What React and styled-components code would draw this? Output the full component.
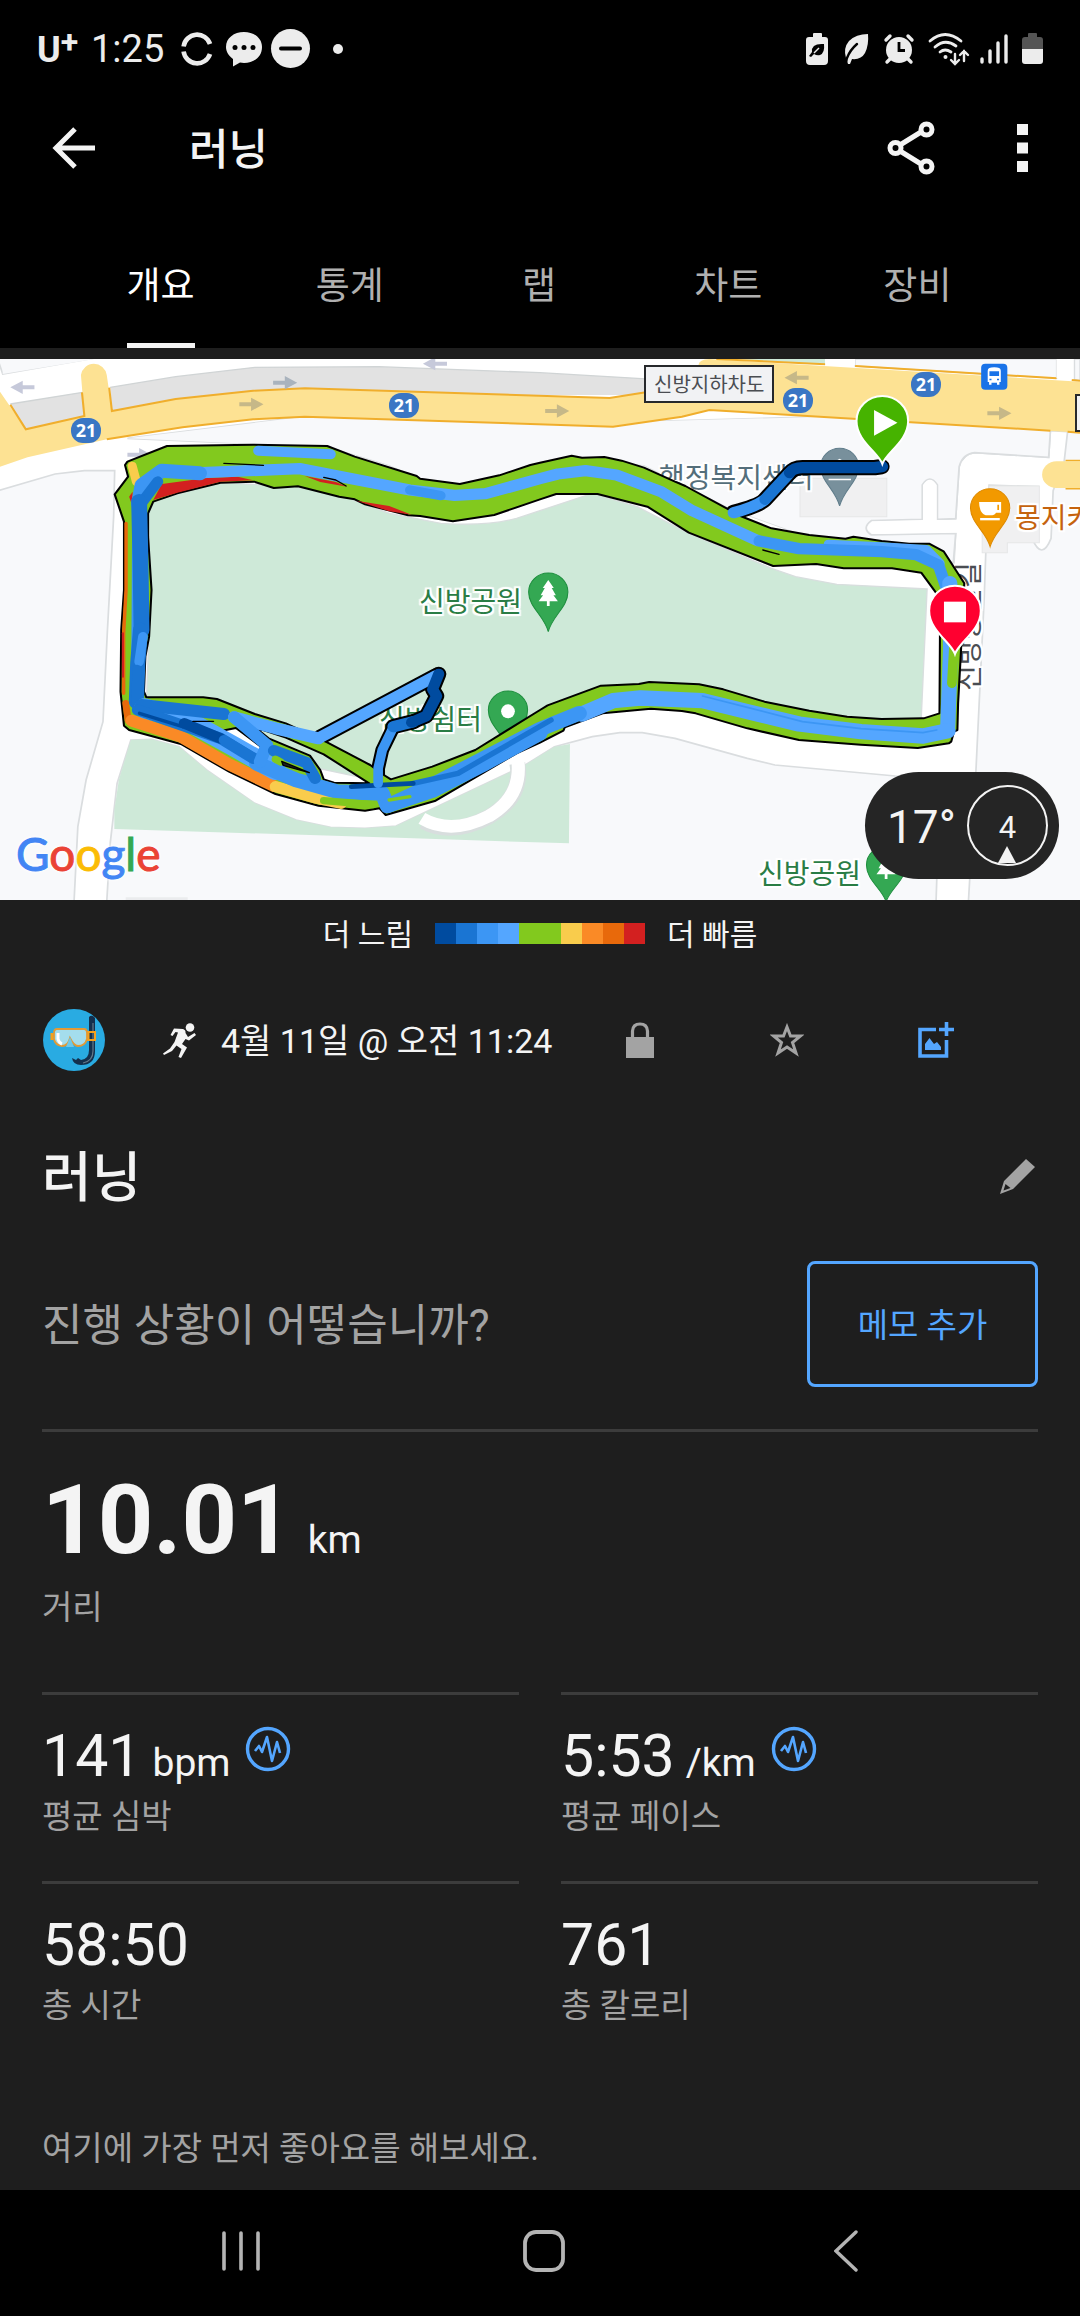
import React from "react";
import styled, { createGlobalStyle } from "styled-components";

const sans = `Roboto, "Noto Sans CJK KR", "Noto Sans", sans-serif`;

const color = {
  bar: "#000000",
  page: "#1e1e1e",
  text: "#f4f4f4",
  muted: "#a3a3a3",
  line: "#3c3c3c",
  accent: "#54a6ff",
};

const pace = {
  slowest: "#004b9f",
  slower: "#1a75d3",
  slow: "#3c96f4",
  easy: "#54a6ff",
  steady: "#82c91e",
  brisk: "#f9cc4c",
  fast: "#fa8a26",
  faster: "#e8690b",
  fastest: "#d32020",
};

const Global = createGlobalStyle`
  *, *::before, *::after { box-sizing: border-box; }
  body { margin: 0; background: ${color.page}; font-family: ${sans}; color: ${color.text}; }
  button { font: inherit; color: inherit; background: none; border: 0; padding: 0; cursor: pointer; }
  h1, h2, p, dl, dd, dt { margin: 0; font-weight: 400; }
  svg { display: block; }
`;

const Screen = styled.div`
  display: flex;
  flex-direction: column;
  min-height: 100vh;
  overflow: hidden;
`;

/* ---------- status bar ---------- */

const StatusBar = styled.div`
  display: flex;
  align-items: center;
  justify-content: space-between;
  height: 97px;
  padding: 0 37px;
  background: ${color.bar};
  color: #ececec;
`;

const StatusGroup = styled.div`
  display: flex;
  align-items: center;
  gap: ${(p) => p.$gap || 0}px;
  svg { overflow: visible; }
`;

const Carrier = styled.span`
  display: flex;
  width: 54px;
  padding-top: 2px;
  font: 700 36px/40px Roboto, sans-serif;
  sup { font-size: 32px; line-height: 24px; vertical-align: top; }
`;

const Clock = styled.span`
  width: 82px;
  font-size: 38px;
  line-height: 46px;
`;

const StatusCell = styled.span`
  display: grid;
  place-items: center;
  width: 47px;
  height: 47px;
`;

/* ---------- header ---------- */

const Header = styled.header`
  background: ${color.bar};
`;

const AppBar = styled.div`
  display: flex;
  align-items: center;
  height: 102px;
  padding: 0 42px 0 50px;
`;

const IconButton = styled.button`
  display: grid;
  place-items: center;
  width: ${(p) => p.$width || 48}px;
  height: 62px;
  color: ${(p) => p.$color || color.text};
`;

const AppTitle = styled.h1`
  flex: 1;
  padding: 4px 0 0 91px;
  font-size: 43px;
  line-height: 50px;
  font-weight: 500;
`;

const AppActions = styled.div`
  display: flex;
  align-items: center;
  gap: 71px;
`;

const Tabs = styled.nav`
  display: grid;
  grid-template-columns: repeat(5, 1fr);
  height: 149px;
  padding: 32px 68px 0 66px;
`;

const Tab = styled.button`
  justify-self: center;
  font-size: 37px;
  line-height: 50px;
  border-bottom: 5px solid ${(p) => (p.$active ? color.text : "transparent")};
  color: ${(p) => (p.$active ? "#ffffff" : "#b0b0b0")};
`;

/* ---------- map ---------- */

const MapPanel = styled.section`
  position: relative;
  margin-top: 11px;
  aspect-ratio: 1080 / 541;
  overflow: hidden;
  background: #f8f9fb;
`;

const MapLayer = styled.svg`
  position: absolute;
  inset: 0;
  width: 100%;
  height: 100%;
`;

const Pinned = styled.span`
  position: absolute;
  left: ${(p) => p.$x}px;
  top: ${(p) => p.$y}px;
  white-space: nowrap;
`;

const PlaceName = styled(Pinned)`
  font-size: 28px;
  line-height: 36px;
  color: ${(p) => p.$tone};
  text-shadow: 2px 0 1px #fff, -2px 0 1px #fff, 0 2px 1px #fff, 0 -2px 1px #fff,
    2px 2px 1px #fff, -2px -2px 1px #fff, 2px -2px 1px #fff, -2px 2px 1px #fff;
`;

const StreetName = styled(PlaceName)`
  transform-origin: 0 0;
  transform: rotate(-90deg);
`;

const RoadSign = styled(Pinned)`
  height: 38px;
  padding: 0 8px;
  border: 2px solid #26282b;
  background: #f1f2f4;
  color: #4a4d52;
  font-size: 20px;
  line-height: 36px;
`;

const Shield = styled(Pinned)`
  width: 30px;
  height: 25px;
  border-radius: 12px;
  background: #3a76c4;
  color: #fff;
  font: 700 18px/25px "Noto Sans", sans-serif;
  text-align: center;
`;

const Brand = styled(Pinned)`
  font: 400 46px/58px Lato, sans-serif;
  -webkit-text-stroke: 1px currentColor;
  text-shadow: 0 0 5px #fff, 0 0 5px #fff;
`;

const BrandLetter = styled.span`
  color: ${(p) => p.$c};
`;

const Weather = styled.div`
  position: absolute;
  right: 21px;
  bottom: 21px;
  display: flex;
  align-items: center;
  justify-content: space-between;
  width: 194px;
  height: 107px;
  padding: 0 11px 0 22px;
  border-radius: 54px;
  background: #252525;
  font-size: 46px;
  line-height: 56px;
`;

const Degrees = styled.span`
  padding-top: 3px;
`;

const Wind = styled.div`
  position: relative;
  width: 81px;
  height: 81px;
  border: 2px solid ${color.text};
  border-radius: 50%;
  font-size: 31px;
  line-height: 82px;
  text-align: center;
  svg { position: absolute; left: 28px; bottom: 0; }
`;

/* ---------- body ---------- */

const Legend = styled.div`
  display: flex;
  align-items: center;
  justify-content: center;
  gap: 22px;
  height: 66px;
  font-size: 30px;
  line-height: 40px;
`;

const LegendText = styled.span`
  padding-top: 3px;
`;

const Scale = styled.div`
  display: flex;
  height: 21px;
`;

const Swatch = styled.span`
  width: ${(p) => p.$span * 21}px;
  background: ${(p) => p.$c};
`;

const Body = styled.main`
  flex: 1;
  padding: 0 42px;
`;

const MetaRow = styled.div`
  display: flex;
  align-items: center;
  height: 148px;
`;

const When = styled.p`
  display: flex;
  flex: 1;
  align-items: center;
  gap: 23px;
  padding: 2px 0 0 57px;
  font-size: 34px;
  line-height: 46px;
  white-space: nowrap;
`;

const MetaActions = styled.div`
  display: grid;
  grid-template-columns: 147px 147px 151px;
  justify-items: center;
  margin-right: 27px;
`;

const TitleRow = styled.div`
  display: flex;
  align-items: center;
  justify-content: space-between;
  height: 126px;
`;

const ActivityTitle = styled.h2`
  padding-top: 4px;
  font-size: 54px;
  line-height: 72px;
  font-weight: 500;
`;

const NoteRow = styled.div`
  display: flex;
  align-items: center;
  justify-content: space-between;
  padding: 21px 0 42px;
  border-bottom: 3px solid ${color.line};
`;

const Prompt = styled.p`
  padding-top: 3px;
  color: ${color.muted};
  font-size: 44px;
  line-height: 60px;
`;

const OutlineButton = styled.button`
  width: 231px;
  height: 126px;
  padding-top: 3px;
  border: 3px solid ${color.accent};
  border-radius: 8px;
  color: ${color.accent};
  font-size: 33px;
  line-height: 44px;
`;

const Distance = styled.dl`
  display: flex;
  flex-direction: column-reverse;
  justify-content: flex-end;
  gap: 8px;
  height: 260px;
  padding-top: 30px;
`;

const Big = styled.dd`
  font-size: 97px;
  line-height: 116px;
  font-weight: 700;
`;

const Unit = styled.span`
  margin-left: ${(p) => p.$gap || 11}px;
  font-size: 39px;
  line-height: 40px;
  font-weight: 400;
`;

const Label = styled.dt`
  color: ${color.muted};
  font-size: 33px;
  line-height: 44px;
`;

const Stats = styled.dl`
  display: grid;
  grid-template-columns: 1fr 1fr;
  column-gap: 42px;
`;

const Stat = styled.div`
  display: flex;
  flex-direction: column-reverse;
  justify-content: flex-end;
  gap: 4px;
  height: 189px;
  padding-top: 26px;
  border-top: 3px solid ${color.line};
`;

const Value = styled.dd`
  display: flex;
  align-items: flex-start;
  gap: 15px;
  font-size: 59px;
  line-height: 70px;
  svg { margin-top: 5px; }
`;

const Likes = styled.p`
  padding: 56px 0 18px;
  color: ${color.muted};
  font-size: 33px;
  line-height: 46px;
`;

const NavBar = styled.nav`
  display: flex;
  justify-content: space-between;
  height: 126px;
  padding: 0 210px 0 217px;
  background: ${color.bar};
`;

const NavButton = styled(IconButton)`
  height: 122px;
  color: #b4b4b4;
`;

/* ---------- map data ---------- */

const ring =
  "M363 345 L370 335 L485 288 L735 284 L950 288 L1030 320 L1210 378 L1220 386 L1335 402 L1450 376 L1540 345 L1568 338 L1660 317 L1690 323 L1755 321 L1805 332 L1870 353 L1960 395 L1990 408 L2110 475 L2150 498 L2240 535 L2350 555 L2455 566 L2478 560 L2560 573 L2640 581 L2698 581 L2740 604 L2800 700 L2790 910 L2782 1060 L2780 1140 L2770 1145 L2762 1175 L2755 1180 L2665 1194 L2500 1184 L2320 1170 L2170 1135 L2020 1090 L1980 1083 L1890 1076 L1750 1090 L1640 1132 L1636 1142 L1568 1178 L1500 1210 L1265 1352 L1120 1395 L1102 1375 L1060 1382 L925 1367 L800 1332 L665 1265 L525 1182 L375 1140 L360 1127 L350 1025 L352 840 L360 720 L360 515 L333 433 L372 380 Z " +
  "M430 490 L445 455 L515 430 L640 398 L738 395 L795 414 L865 409 L985 440 L1030 448 L1060 463 L1185 496 L1220 498 L1315 514 L1435 495 L1568 448 L1615 432 L1735 432 L1880 470 L2000 548 L2245 648 L2370 642 L2450 655 L2590 655 L2675 668 L2730 745 L2728 1090 L2682 1105 L2560 1107 L2460 1100 L2350 1082 L2220 1055 L2100 1018 L2030 1003 L1885 996 L1855 1002 L1745 1007 L1590 1066 L1568 1080 L1380 1200 L1255 1250 L1135 1288 L1110 1272 L1075 1245 L950 1177 L830 1120 L740 1092 L630 1047 L590 1042 L425 1042 L418 1025 L422 920 L433 860 L440 720 L430 560 Z " +
  "M740 1132 L830 1163 L940 1213 L1072 1300 L970 1298 L940 1288 L930 1260 L900 1217 L780 1165 Z " +
  "M645 1142 L685 1134 L768 1198 L758 1213 L690 1175 Z";

const strands = [
  ["M750 302 L960 313", "easy", 30],
  ["M384 348 L396 395", "brisk", 26],
  ["M366 520 L366 720 L359 850 L359 1030", "faster", 10],
  ["M357 850 L357 980", "fastest", 6],
  ["M365 1060 L372 1110", "faster", 20],
  ["M382 1112 L525 1160 L665 1243 L795 1308", "fast", 36],
  ["M800 1310 L920 1345 L990 1360", "brisk", 34],
  ["M394 450 L392 800 L390 1050", "slow", 20],
  ["M2405 582 L2560 590 L2690 598 L2730 640", "easy", 26],
  ["M585 368 L870 356 L1190 420 L1320 436 L1410 431 L1568 386 L1620 372 L1700 362 L1790 375 L1920 425 L2010 482 L2200 572", "easy", 34],
  ["M1190 420 L1280 437", "slow", 28],
  ["M2205 573 L2320 596 L2560 605 L2660 614 L2725 645 L2750 720", "slow", 34],
  ["M402 460 L412 405 L470 362 L580 370", "slow", 42],
  ["M410 460 L458 395", "slower", 32],
  ["M404 455 L408 640 L411 840", "slower", 46],
  ["M408 840 L400 940 L396 1055", "slower", 44],
  ["M415 860 L404 935", "slow", 28],
  ["M398 958 L396 1060", "slower", 28],
  ["M2758 700 L2760 900 L2752 1130", "easy", 44],
  ["M2770 890 L2764 1000", "steady", 28],
  ["M2752 1142 L2680 1158 L2500 1145 L2320 1122 L2170 1085 L2040 1052 L1860 1044 L1780 1052 L1690 1092", "easy", 46],
  ["M2720 1140 L2680 1148 L2500 1136 L2330 1115 L2170 1072 L2040 1038", "slow", 5],
  ["M420 1075 L540 1110 L680 1190 L800 1260", "easy", 60],
  ["M1682 1090 L1568 1138 L1400 1228 L1255 1305 L1125 1368 L1110 1330 L980 1325 L860 1290 L745 1240", "slow", 44],
  ["M1568 1150 L1400 1245 L1255 1322 L1130 1365", "slow", 44],
  ["M1130 1350 L1190 1340", "steady", 10],
  ["M940 1352 L1080 1364", "steady", 22],
  ["M1600 1110 L1440 1205 L1330 1270 L1200 1300", "slower", 16],
  ["M1200 1300 L1020 1310", "slowest", 14],
  ["M410 1065 L650 1092", "slower", 36],
  ["M400 1080 L640 1165 L735 1225", "slower", 34],
  ["M405 1090 L530 1130", "slowest", 10],
  ["M535 1120 L640 1165", "slowest", 32],
  ["M650 1170 L740 1225", "slower", 30],
  ["M680 1102 L800 1135 L925 1165", "easy", 36],
  ["M680 1102 L775 1185 L755 1235", "slow", 36],
  ["M795 1202 L890 1238 L915 1285", "slower", 34],
  ["M800 1228 L815 1236", "steady", 22],
];

const spurs = [
  { d: "M930 1162 L1265 978", c: "easy", w: 34 },
  { d: "M1098 1300 L1098 1255 L1110 1200 L1142 1132", c: "slow", w: 28 },
  { d: "M1142 1130 L1200 1115", c: "slower", w: 34 },
  { d: "M1195 1117 L1238 1098 L1268 1038 L1256 1018 L1274 972", c: "slowest", w: 32 },
];

const roadArrows = [
  [30, 112, -1, "#c6c9da"],
  [793, 98, 1, "#a9b3bd"],
  [695, 163, 1, "#c6b888"],
  [1228, 41, -1, "#c6c9da"],
  [1583, 183, 1, "#c6b888"],
  [2278, 83, -1, "#c6b888"],
  [2867, 190, 1, "#c6b888"],
  [370, 314, 1, "#c6c9da"],
];

function Pin({ x, y, r, tip, fill, stroke, children }) {
  return (
    <g>
      <path
        d={`M${x} ${tip} C${x - 12} ${y + r * 1.25} ${x - r} ${y + r * 0.8} ${x - r} ${y} A${r} ${r} 0 0 1 ${x + r} ${y} C${x + r} ${y + r * 0.8} ${x + 12} ${y + r * 1.25} ${x} ${tip}Z`}
        fill={fill}
        stroke={stroke}
        strokeWidth={stroke === "#fff" ? 6 : 3}
      />
      {children}
    </g>
  );
}

const Tree = ({ x, y }) => (
  <path
    transform={`translate(${x} ${y})`}
    d="M0 -36 L16 -12 H10 L22 10 H15 L28 28 H4 V42 H-4 V28 H-28 L-15 10 H-22 L-10 -12 H-16Z"
    fill="#fff"
  />
);

function BaseMap() {
  return (
    <MapLayer viewBox="0 27 3136 1623" preserveAspectRatio="none" aria-hidden="true">
      <rect y="27" width="3136" height="1623" fill="#f8f9fb" />
      <g stroke="#dadddf" strokeWidth="5" fill="#fff">
        <path d="M-9 20 L8 72 L275 24 L3140 10 V240 L2400 200 L1600 222 L885 200 L370 265 L740 282 L960 292 L1130 345 L1300 420 L1650 330 L1870 345 L2130 480 L2400 580 L2700 600 L2770 640 L2775 550 L2530 555 Q2515 535 2530 512 L2678 508 V405 Q2700 370 2722 405 L2722 508 L2775 506 L2785 350 Q2795 312 2830 308 L3045 322 L3050 242 L3100 245 L3090 335 L3058 422 L3052 565 Q3025 635 2997 565 L3015 410 L2872 405 L2862 620 L2858 740 L2833 1280 L2812 1655 H2718 L2730 1280 L2600 1278 L2250 1245 L2170 1225 L1960 1165 L1865 1148 L1800 1148 L1720 1160 L1610 1190 L1525 1245 L1150 1428 L1060 1435 L960 1432 L860 1410 L740 1360 L670 1310 L600 1260 L520 1190 L440 1168 L380 1170 L340 1300 L320 1480 L310 1655 H215 L226 1430 L250 1290 L299 1115 L312 840 L330 500 L333 362 L245 362 L160 372 L-9 423Z" />
      </g>
      <path d="M8 27 V72 L275 27Z" fill="#f8f9fb" />
      <path d="M370 265 L740 282 L960 292 L1130 345 L1300 420 L1650 330 L1870 345 L2130 480 L2400 580 L2700 600 L2770 640 L2775 550 L2530 555 Q2515 535 2530 512 L2678 508 V405 Q2700 370 2722 405 L2722 508 L2775 506 L2785 350 Q2795 312 2830 308 L3045 322 L3050 242 L2400 200 L1600 222 L885 200Z" fill="#f8f9fb" />
      <path d="M2400 576 L2700 600 L2768 640 L2775 550 L2530 555 Q2500 535 2530 512 L2678 508 V405 Q2700 370 2722 405 V508 L2775 506 L2785 350 Q2795 312 2830 308 L3045 322 L3050 242" fill="none" stroke="#dadddf" strokeWidth="5" />
      <path d="M2532 514 L2680 510 V405 Q2700 374 2720 405 V510 H2785 V548 L2532 552 Q2506 535 2532 514Z" fill="#fff" />
      <path d="M380 1170 L440 1168 L520 1190 L600 1260 L670 1310 L740 1360 L860 1410 L960 1432 L1060 1435 L1150 1428 L1525 1245 L1610 1190 L1655 1182 L1652 1480 L1200 1465 L332 1437 V1380 L345 1290Z" fill="#cee9d8" />
      <path d="M1230 1415 Q1310 1460 1420 1400 Q1520 1340 1502 1240" fill="none" stroke="#d8dede" strokeWidth="46" />
      <path d="M1225 1405 Q1310 1456 1420 1398 Q1515 1340 1504 1235" fill="none" stroke="#fff" strokeWidth="38" />
      <path d="M430 480 L450 450 L640 398 L860 410 L1000 440 L1130 490 L1280 520 Q1410 530 1500 505 L1568 482 L1720 430 L1850 470 L2000 550 L2240 655 L2310 680 L2430 703 L2692 717 L2675 1105 L2560 1108 L2250 1080 L1900 1000 L1750 1010 L1568 1090 L1400 1200 L1130 1300 L900 1250 L650 1090 L425 1060 L437 720Z" fill="#cee9d8" stroke="#d8dede" strokeWidth="4" />
      <path d="M2323 385 H2575 V500 H2323Z M2872 408 H3018 V578 H2925 V608 H2852 V540 H2872Z" fill="#f0f0f1" stroke="#e6e7e8" strokeWidth="3" />
      <path d="M365 1642 H545 V1655 H365Z" fill="#ebecee" />

      <path d="M30 162 L240 127 L245 198 L75 238Z M320 112 L510 80 L740 52 L1100 50 L1568 68 L1900 88 V135 H1500 L885 118 L510 150 L325 183Z" fill="#e2e2e2" />
      <path d="M30 162 L240 127 M320 112 L510 80 L740 52 L1100 50 L1568 68 L1900 88" fill="none" stroke="#d0d4d5" strokeWidth="4" />
      <path d="M2120 27 H2396 V42Z" fill="#cee9d8" />
      <path d="M2483 27 H3068 V85 L2483 48Z M3120 27 H3136 V92 L3120 88Z" fill="#f8f9fb" stroke="#dadddf" strokeWidth="4" />
      <path d="M0 125 L75 238 L245 198 L235 75 A38 40 0 0 1 310 75 L325 183 L510 147 L735 122 L885 115 L1770 145 L2028 95 V45 Q2030 28 2060 27 L3136 95 V248 L2060 180 L1980 200 L1780 230 L885 200 L735 208 L530 232 L310 268 L80 322 L0 350Z" fill="#fde293" />
      <path d="M30 164 L75 238 L245 198 L238 127 M317 113 L325 183 L510 147 L735 122 L885 115 L1770 144 L1880 126 M2080 27 L2396 43 M2483 48 L3068 85 M3112 90 L3136 92 M3136 248 L3100 245 M3050 242 L2060 180 L1980 200 L1780 230 L885 200 L735 208 L530 232 L310 268" fill="none" stroke="#f0ae2c" strokeWidth="6" />
      <path d="M3094 332 H3136 M3094 416 H3136" fill="none" stroke="#f0ae2c" strokeWidth="5" />
      <path d="M3136 334 H3068 A42 40 0 0 0 3068 414 H3136Z" fill="#fde293" />
      <path d="M2396 20 H2483 V46 L2396 41Z M3068 20 H3114 V88 L3068 84Z" fill="#fff" />
      {roadArrows.map(([x, y, dir, c]) => (
        <path
          key={`${x}-${y}`}
          transform={`translate(${dir < 0 ? x + 70 : x} ${y}) scale(${dir} 1)`}
          d="M0 -6 H34 V-20 L70 0 L34 20 V6 H0Z"
          fill={c}
        />
      ))}

      <Pin x={2438} y={350} r={55} tip={468} fill="#78909c" stroke="#607d8b">
        <path d="M2438 326 L2470 345 H2406Z M2411 352 H2422 V372 H2411Z M2433 352 H2444 V372 H2433Z M2455 352 H2466 V372 H2455Z M2406 386 H2471 V391 H2406Z" fill="#fff" />
      </Pin>
      <Pin x={2875} y={473} r={57} tip={590} fill="#f29900" stroke="#de8a00">
        <path d="M2843 456 H2907 V488 H2892 Q2888 496 2876 496 H2862 Q2843 488 2843 456 M2896 464 V480 H2901 V464Z" fill="#fff" fillRule="evenodd" />
        <path d="M2846 504 H2903 V511 H2846Z" fill="#fff" />
      </Pin>
      <Pin x={1592} y={726} r={57} tip={845} fill="#34a853" stroke="#1e8e3e">
        <Tree x={1592} y={726} />
      </Pin>
      <Pin x={1475} y={1080} r={57} tip={1200} fill="#34a853" stroke="#1e8e3e">
        <ellipse cx="1475" cy="1084" rx="20" ry="21" fill="#fff" />
      </Pin>
      <Pin x={2573} y={1545} r={57} tip={1655} fill="#34a853" stroke="#1e8e3e">
        <Tree x={2573} y={1545} />
      </Pin>
      <rect x="2849" y="41" width="76" height="78" rx="12" fill="#1a73e8" />
      <path d="M2868 62 Q2868 52 2887 52 Q2906 52 2906 62 V96 H2902 V104 H2895 V98 H2879 V104 H2872 V96 H2868Z M2873 64 V78 H2901 V64Z M2873 86 V91 H2879 V86Z M2895 86 V91 H2901 V86Z" fill="#fff" fillRule="evenodd" />
    </MapLayer>
  );
}

function RouteLayer() {
  return (
    <MapLayer viewBox="0 27 3136 1623" preserveAspectRatio="none" role="img" aria-label="러닝 경로">
      <g fill="none" strokeLinejoin="round" strokeLinecap="round">
        <path d="M2560 350 L2540 353 L2330 353 Q2305 353 2290 372 L2220 450 Q2205 466 2130 487" stroke="#000" strokeWidth="46" />
        {spurs.map((s) => (
          <path key={s.d} d={s.d} stroke="#000" strokeWidth={s.w + 12} />
        ))}
        <path d={ring} fill={pace.steady} fillRule="evenodd" stroke="#000" strokeWidth="6" />
        <path d="M445 450 L515 428 L640 395 L735 391 L690 380 L600 384 L470 402Z M885 378 L975 396 L1008 410 L930 396Z M1035 452 L1130 468 L1195 494 L1130 484Z M375 440 L385 425 V470Z" fill={pace.fastest} />
        {strands.map(([d, c, w]) => (
          <path key={d} d={d} stroke={pace[c]} strokeWidth={w} />
        ))}
        <path d="M650 340 L765 346 M940 382 L975 390 L1005 408 M2215 600 L2262 613 M560 1114 L620 1114" stroke="#000" strokeWidth="4" />
        <path d="M818 1234 L898 1268 L822 1246Z" fill="#1e1e1e" stroke="#000" strokeWidth="4" />
        <path d="M2130 488 Q2190 472 2220 450" stroke={pace.slow} strokeWidth="34" />
        <path d="M2222 448 L2290 372" stroke={pace.slower} strokeWidth="34" />
        <path d="M2562 350 L2540 353 L2330 353 Q2305 353 2293 368" stroke={pace.slowest} strokeWidth="34" />
        {spurs.map((s) => (
          <path key={s.d} d={s.d} stroke={pace[s.c]} strokeWidth={s.w} />
        ))}
      </g>
      <Pin x={2562} y={213} r={75} tip={342} fill="#46b300" stroke="#fff">
        <path d="M2538 180 V257 L2606 218Z" fill="#fff" />
      </Pin>
      <Pin x={2773} y={782} r={75} tip={912} fill="#ff0030" stroke="#fff">
        <rect x="2741" y="755" width="64" height="62" fill="#fff" />
      </Pin>
    </MapLayer>
  );
}

const park = "#2a7d45";
const shields = [[71, 59], [389, 34], [783, 29], [911, 13]];
const letters = [["G", "#4285f4"], ["o", "#ea4335"], ["o", "#fbbc05"], ["g", "#4285f4"], ["l", "#34a853"], ["e", "#ea4335"]];
const scale = [
  ["slowest", 1], ["slower", 1], ["slow", 1], ["easy", 1], ["steady", 2],
  ["brisk", 1], ["fast", 1], ["faster", 1], ["fastest", 1],
];

/* ---------- icons ---------- */

const PulseIcon = () => (
  <svg width="46" height="46" viewBox="0 0 46 46" fill="none" stroke={color.accent} strokeLinejoin="round">
    <circle cx="23" cy="23" r="20.5" strokeWidth="3.4" />
    <path d="M10 25 L14 20 L17 26 L22 11 L27 35 L32 16 L35 27" strokeWidth="2.6" />
  </svg>
);

const LeafShape = ({ fill, vein }) => (
  <g>
    <path d="M24 1 Q12 1 5 8 Q-1 15 2 25 L4 25 Q3 29 4 31 H6 L8 26 Q17 27 21 20 Q25 12 24 1Z" fill={fill} />
    <path d="M3 25 Q6 17 13 11" stroke={vein} strokeWidth="2.4" fill="none" strokeLinecap="round" />
  </g>
);

function StatusIcons() {
  return (
    <StatusGroup $gap={14} aria-hidden="true">
      <svg width="24" height="32" viewBox="0 0 24 32">
        <path d="M7 1 Q7 0 8 0 H15 Q16 0 16 1 V4 H19 Q22 4 22 7 V28 Q22 32 18 32 H4 Q0 32 0 28 V7 Q0 4 3 4 H7Z" fill="#ececec" />
        <path d="M18 11 Q5 10 6 19 L3 23 L5 24 L8 21 Q11 23 14 22 Q19 20 18 11Z" fill="#000" />
        <path d="M8 20 L13 15" stroke="#ececec" strokeWidth="1.4" />
      </svg>
      <svg width="26" height="32" viewBox="0 0 26 32"><LeafShape fill="#ececec" vein="#000" /></svg>
      <svg width="30" height="30" viewBox="0 0 30 30">
        <circle cx="15" cy="16" r="13" fill="#ececec" />
        <path d="M2 6 L6 2 M28 6 L24 2 M6 25 L3 28 M24 25 L27 28" stroke="#ececec" strokeWidth="3.4" strokeLinecap="round" />
        <path d="M15 8 V16.500 H21" stroke="#000" strokeWidth="2.8" fill="none" />
      </svg>
      <svg width="42" height="32" viewBox="0 0 42 32" fill="none" stroke="#ececec" strokeLinecap="round">
        <path d="M2 8 Q17 -5 33 8 M7 14 Q17 5 28 13 M12 19 Q17 15 23 19" strokeWidth="2.800" />
        <circle cx="17.500" cy="24" r="2" fill="#ececec" stroke="none" />
        <path d="M27 21 V30 M23 27 L27 31 L31 27 M36 28 V18 M32 22 L36 18 L40 22" strokeWidth="2.400" />
      </svg>
      <svg width="24" height="30" viewBox="4 0 24 30" stroke="#ececec" strokeWidth="3.400" strokeLinecap="round">
        <path d="M2 25 V28 M10 17 V28 M18 9 V28 M26 2 V28" />
      </svg>
      <svg width="21" height="31" viewBox="0 0 21 31">
        <path d="M6 1 Q6 0 7 0 H14 Q15 0 15 1 V4 H18 Q21 4 21 7 V16 H0 V7 Q0 4 3 4 H6Z" fill="#555" />
        <path d="M0 16 H21 V28 Q21 31 18 31 H3 Q0 31 0 28Z" fill="#ececec" />
      </svg>
    </StatusGroup>
  );
}

function Avatar() {
  return (
    <svg width="64" height="62" viewBox="0 0 64 62" role="img" aria-label="프로필">
      <circle cx="32" cy="31" r="31" fill="#29abe2" />
      <path d="M47 8 Q50 5 53 9 V42 Q53 56 39 56 Q31 56 30 49 L34 51 L36 49 L39 51 Q47 50 47 41Z" fill="#14304d" />
      <path d="M51 14 V42 Q51 52 41 54" stroke="#65798a" strokeWidth="1.200" fill="none" />
      <rect x="45" y="23" width="8" height="8" fill="none" stroke="#f5a11c" strokeWidth="2" />
      <path d="M10 24 V31 M46 23 V31" stroke="#f5a11c" strokeWidth="3" />
      <path d="M15 20 H42 Q45 20 45 24 V30 Q43 37 36 37 Q32 37 28 29 Q26 37 20 37 Q13 36 12 30 V24 Q12 20 15 20Z" fill="#a4dded" stroke="#e39a35" strokeWidth="1.800" />
      <path d="M16 24 V30 Q17 34 20 35" stroke="#fff" strokeWidth="3" fill="none" />
      <path d="M28 28 L32 38 H24Z" fill="#6cc8ea" />
    </svg>
  );
}

const Runner = () => (
  <svg width="35" height="36" viewBox="0 0 35 36" aria-hidden="true">
    <circle cx="27" cy="4.500" r="4.300" fill={color.text} />
    <path d="M11 5.500 L20 6 Q23 7 22.500 10 L25 14 L31.500 10 L33 12 L26 17.500 L22.500 16 L19 21 L24 24.500 L18 35 L15.500 34 L18.500 26 L13.500 22.500 L9 28 L1 32 L0 30.500 L7 25.500 L11.500 19 L15 9.500 L12.500 9 L9.500 13 L7.500 12Z" fill={color.text} />
  </svg>
);

/* ---------- app ---------- */

const tabs = ["개요", "통계", "랩", "차트", "장비"];

const stats = [
  { value: "141", unit: "bpm", label: "평균 심박", pulse: true },
  { value: "5:53", unit: "/km", label: "평균 페이스", pulse: true },
  { value: "58:50", label: "총 시간" },
  { value: "761", label: "총 칼로리" },
];

export default function App() {
  return (
    <Screen>
      <Global />
      <StatusBar>
        <StatusGroup>
          <Carrier>U<sup>+</sup></Carrier>
          <Clock>1:25</Clock>
          <StatusCell>
            <svg width="32" height="32" viewBox="0 0 32 32" fill="none" stroke="#ececec" strokeWidth="4.600">
              <path d="M2.600 13.500 A13.600 13.600 0 0 1 29 11 M2.600 18.500 A13.600 13.600 0 0 0 29 21" />
            </svg>
          </StatusCell>
          <StatusCell>
            <svg width="36" height="34" viewBox="0 0 36 34">
              <path d="M18 0 C28 0 36 6 36 15 C36 25 28 31 18 31 L14 30.500 L7 34.500 V27 C3 24 0 20 0 15 C0 6 8 0 18 0Z" fill="#ececec" />
              <circle cx="9" cy="15.500" r="2.500" /><circle cx="18" cy="15.500" r="2.500" /><circle cx="27" cy="15.500" r="2.500" />
            </svg>
          </StatusCell>
          <StatusCell>
            <svg width="39" height="39" viewBox="0 0 39 39">
              <circle cx="19.500" cy="19.500" r="19.500" fill="#ececec" />
              <path d="M10 19.500 H29" stroke="#000" strokeWidth="4" strokeLinecap="round" />
            </svg>
          </StatusCell>
          <StatusCell>
            <svg width="10" height="10" viewBox="0 0 10 10"><circle cx="5" cy="5" r="5" fill="#ececec" /></svg>
          </StatusCell>
        </StatusGroup>
        <StatusIcons />
      </StatusBar>

      <Header>
        <AppBar>
          <IconButton aria-label="뒤로">
            <svg width="44" height="42" viewBox="0 0 44 42" fill="none" stroke="currentColor" strokeWidth="5">
              <path d="M43 21 H5 M23 2 L4 21 L23 40" />
            </svg>
          </IconButton>
          <AppTitle>러닝</AppTitle>
          <AppActions>
            <IconButton aria-label="공유">
              <svg width="48" height="54" viewBox="0 0 48 54" fill="none" stroke="currentColor" strokeWidth="5">
                <path d="M13 24 L34 11 M13 30 L34 43" />
                <circle cx="8.500" cy="27" r="5.500" /><circle cx="39.500" cy="8.500" r="5.500" /><circle cx="39.500" cy="45.500" r="5.500" />
              </svg>
            </IconButton>
            <IconButton aria-label="더보기" $width={32}>
              <svg width="11" height="48" viewBox="0 0 11 48" fill="currentColor">
                <path d="M0 0 H11 V11 H0Z M0 18.500 H11 V29.500 H0Z M0 37 H11 V48 H0Z" />
              </svg>
            </IconButton>
          </AppActions>
        </AppBar>
        <Tabs role="tablist">
          {tabs.map((t, i) => (
            <Tab key={t} role="tab" aria-selected={i === 0} $active={i === 0}>{t}</Tab>
          ))}
        </Tabs>
      </Header>

      <MapPanel>
        <BaseMap />
        <RoadSign $x={644} $y={6}>신방지하차도</RoadSign>
        <RoadSign $x={1075} $y={35} aria-hidden="true" />
        {shields.map(([x, y]) => (
          <Shield key={x} $x={x} $y={y}>21</Shield>
        ))}
        <PlaceName $x={419} $y={226} $tone={park}>신방공원</PlaceName>
        <PlaceName $x={379} $y={344} $tone={park}>신방쉼터</PlaceName>
        <PlaceName $x={758} $y={498} $tone={park}>신방공원</PlaceName>
        <PlaceName $x={659} $y={102} $tone="#546e7a">행정복지센터</PlaceName>
        <PlaceName $x={1015} $y={142} $tone="#c5630e">몽지카</PlaceName>
        <StreetName $x={952} $y={332} $tone="#4a4d52">신방공원길</StreetName>
        <RouteLayer />
        <Brand $x={16} $y={466} aria-label="Google">
          {letters.map(([l, c], i) => (
            <BrandLetter key={i} $c={c}>{l}</BrandLetter>
          ))}
        </Brand>
        <Weather>
          <Degrees>17°</Degrees>
          <Wind>
            4
            <svg width="20" height="18" viewBox="0 0 20 18"><path d="M10 0 L19 17 H1Z" fill={color.text} /></svg>
          </Wind>
        </Weather>
      </MapPanel>

      <Legend>
        <LegendText>더 느림</LegendText>
        <Scale>
          {scale.map(([name, span]) => (
            <Swatch key={name} $c={pace[name]} $span={span} />
          ))}
        </Scale>
        <LegendText>더 빠름</LegendText>
      </Legend>

      <Body>
        <MetaRow>
          <Avatar />
          <When>
            <Runner />
            4월 11일 @ 오전 11:24
          </When>
          <MetaActions>
            <IconButton aria-label="비공개" $color={color.muted}>
              <svg width="28" height="36" viewBox="0 0 28 36">
                <path d="M0 15 H28 V36 H0Z" fill="currentColor" />
                <path d="M6.500 16 V9 Q7 2 14 2 Q21 2 21.500 9 V16" fill="none" stroke="currentColor" strokeWidth="3.200" />
              </svg>
            </IconButton>
            <IconButton aria-label="즐겨찾기" $color={color.muted}>
              <svg width="34" height="34" viewBox="0 0 34 34" fill="none" stroke="currentColor" strokeWidth="3">
                <path d="M17 4 L20.500 13 H30.500 L22.500 19.500 L26 30 L17 24 L8 30 L11.500 19.500 L3.500 13 H13.500Z" />
              </svg>
            </IconButton>
            <IconButton aria-label="사진 추가" $color={color.accent}>
              <svg width="36" height="36" viewBox="0 0 36 36">
                <path d="M18 7.500 H2 V34 H28.500 V18" fill="none" stroke="currentColor" strokeWidth="3.600" />
                <path d="M28.500 0 V14 M21 7.500 H36" stroke="currentColor" strokeWidth="3.600" />
                <path d="M7 28 V22 L11.500 16 L16 22 L19 20 L23 25 V28Z" fill="currentColor" />
              </svg>
            </IconButton>
          </MetaActions>
        </MetaRow>

        <TitleRow>
          <ActivityTitle>러닝</ActivityTitle>
          <IconButton aria-label="이름 편집" $color={color.muted} $width={40}>
            <svg width="36" height="36" viewBox="0 0 36 36">
              <path d="M26 0 L35 8 L13 30 L0 35 L4 22Z M5.500 25 L3.500 31.500 L10.500 29Z" fill="currentColor" fillRule="evenodd" />
            </svg>
          </IconButton>
        </TitleRow>

        <NoteRow>
          <Prompt>진행 상황이 어떻습니까?</Prompt>
          <OutlineButton>메모 추가</OutlineButton>
        </NoteRow>

        <Distance>
          <Label>거리</Label>
          <Big>10.01<Unit $gap={15}>km</Unit></Big>
        </Distance>

        <Stats>
          {stats.map((s) => (
            <Stat key={s.label}>
              <Label>{s.label}</Label>
              <Value>
                <span>
                  {s.value}
                  {s.unit && <Unit>{s.unit}</Unit>}
                </span>
                {s.pulse && <PulseIcon />}
              </Value>
            </Stat>
          ))}
        </Stats>

        <Likes>여기에 가장 먼저 좋아요를 해보세요.</Likes>
      </Body>

      <NavBar>
        <NavButton aria-label="최근 앱">
          <svg width="38" height="40" viewBox="0 0 38 40" stroke="currentColor" strokeWidth="3.600" strokeLinecap="round">
            <path d="M2 2 V38 M19 2 V38 M36 2 V38" />
          </svg>
        </NavButton>
        <NavButton aria-label="홈">
          <svg width="42" height="42" viewBox="0 0 42 42" fill="none" stroke="currentColor" strokeWidth="3.800">
            <rect x="2" y="2" width="38" height="38" rx="11" />
          </svg>
        </NavButton>
        <NavButton aria-label="뒤로 가기">
          <svg width="24" height="42" viewBox="0 0 24 42" fill="none" stroke="currentColor" strokeWidth="3.400" strokeLinecap="round">
            <path d="M22 2 L2 21 L22 40" />
          </svg>
        </NavButton>
      </NavBar>
    </Screen>
  );
}
